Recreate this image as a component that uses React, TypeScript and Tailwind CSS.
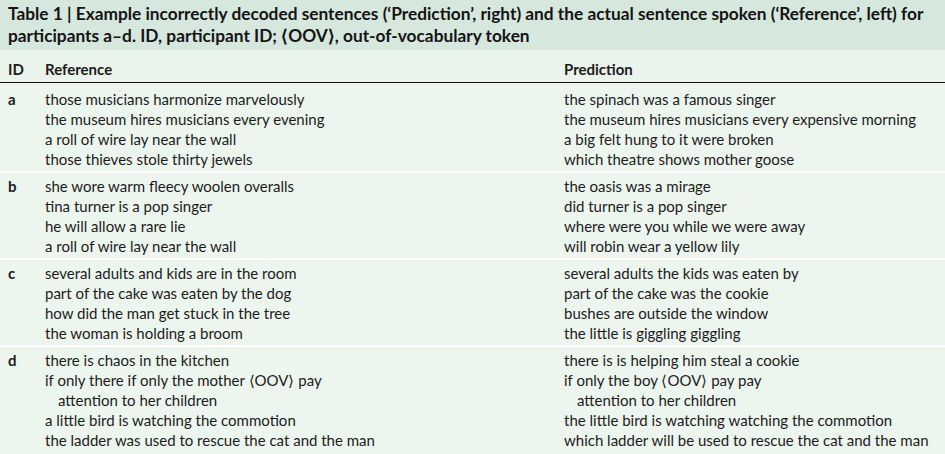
import React from 'react';

interface Row {
  id: string;
  reference: string[];
  prediction: string[];
}

const rows: Row[] = [
  {
    id: 'a',
    reference: [
      'those musicians harmonize marvelously',
      'the museum hires musicians every evening',
      'a roll of wire lay near the wall',
      'those thieves stole thirty jewels',
    ],
    prediction: [
      'the spinach was a famous singer',
      'the museum hires musicians every expensive morning',
      'a big felt hung to it were broken',
      'which theatre shows mother goose',
    ],
  },
  {
    id: 'b',
    reference: [
      'she wore warm fleecy woolen overalls',
      'tina turner is a pop singer',
      'he will allow a rare lie',
      'a roll of wire lay near the wall',
    ],
    prediction: [
      'the oasis was a mirage',
      'did turner is a pop singer',
      'where were you while we were away',
      'will robin wear a yellow lily',
    ],
  },
  {
    id: 'c',
    reference: [
      'several adults and kids are in the room',
      'part of the cake was eaten by the dog',
      'how did the man get stuck in the tree',
      'the woman is holding a broom',
    ],
    prediction: [
      'several adults the kids was eaten by',
      'part of the cake was the cookie',
      'bushes are outside the window',
      'the little is giggling giggling',
    ],
  },
  {
    id: 'd',
    reference: [
      'there is chaos in the kitchen',
      'if only there if only the mother \u27e8OOV\u27e9 pay',
      '   attention to her children',
      'a little bird is watching the commotion',
      'the ladder was used to rescue the cat and the man',
    ],
    prediction: [
      'there is is helping him steal a cookie',
      'if only the boy \u27e8OOV\u27e9 pay pay',
      '   attention to her children',
      'the little bird is watching watching the commotion',
      'which ladder will be used to rescue the cat and the man',
    ],
  },
];

const Lines: React.FC<{ lines: string[] }> = ({ lines }) => (
  <div className="flex flex-col">
    {lines.map((line, i) => (
      <div key={i} className={`h-5 leading-5 whitespace-nowrap ${line.startsWith(' ') ? 'pl-[13px]' : ''}`}>
        {line.trim()}
      </div>
    ))}
  </div>
);

export default function App() {
  return (
    <div
      className="w-[945px] h-[454px] overflow-hidden bg-[#edf5ef] text-[#1c1c1c]"
      style={{ fontFamily: 'Lato, "Open Sans", sans-serif' }}
    >
      <div className="h-[50px] bg-[#d6e7dd] px-2 pt-[3px] text-[17.3px] font-bold leading-[22px] text-[#141414] whitespace-nowrap">
        <div>
          Table 1 | Example incorrectly decoded sentences (‘Prediction’, right) and the actual sentence spoken (‘Reference’, left) for
        </div>
        <div>participants a–d. ID, participant ID; ⟨OOV⟩, out-of-vocabulary token</div>
      </div>

      <div className="flex h-[33px] items-center border-b-[1.5px] border-[#111] bg-[#eaf3ec] pt-[6px] text-[15px] font-bold">
        <div className="w-[45px] pl-2">ID</div>
        <div className="w-[519px]">Reference</div>
        <div>Prediction</div>
      </div>

      {rows.map((row, i) => (
        <div
          key={row.id}
          className={`flex pb-[2px] text-[15px] ${i === 0 ? 'pt-[6px]' : 'border-t-2 border-white pt-[3px]'}`}
        >
          <div className="w-[45px] pl-2 leading-5 font-bold">{row.id}</div>
          <div className="w-[519px]">
            <Lines lines={row.reference} />
          </div>
          <div>
            <Lines lines={row.prediction} />
          </div>
        </div>
      ))}
    </div>
  );
}
